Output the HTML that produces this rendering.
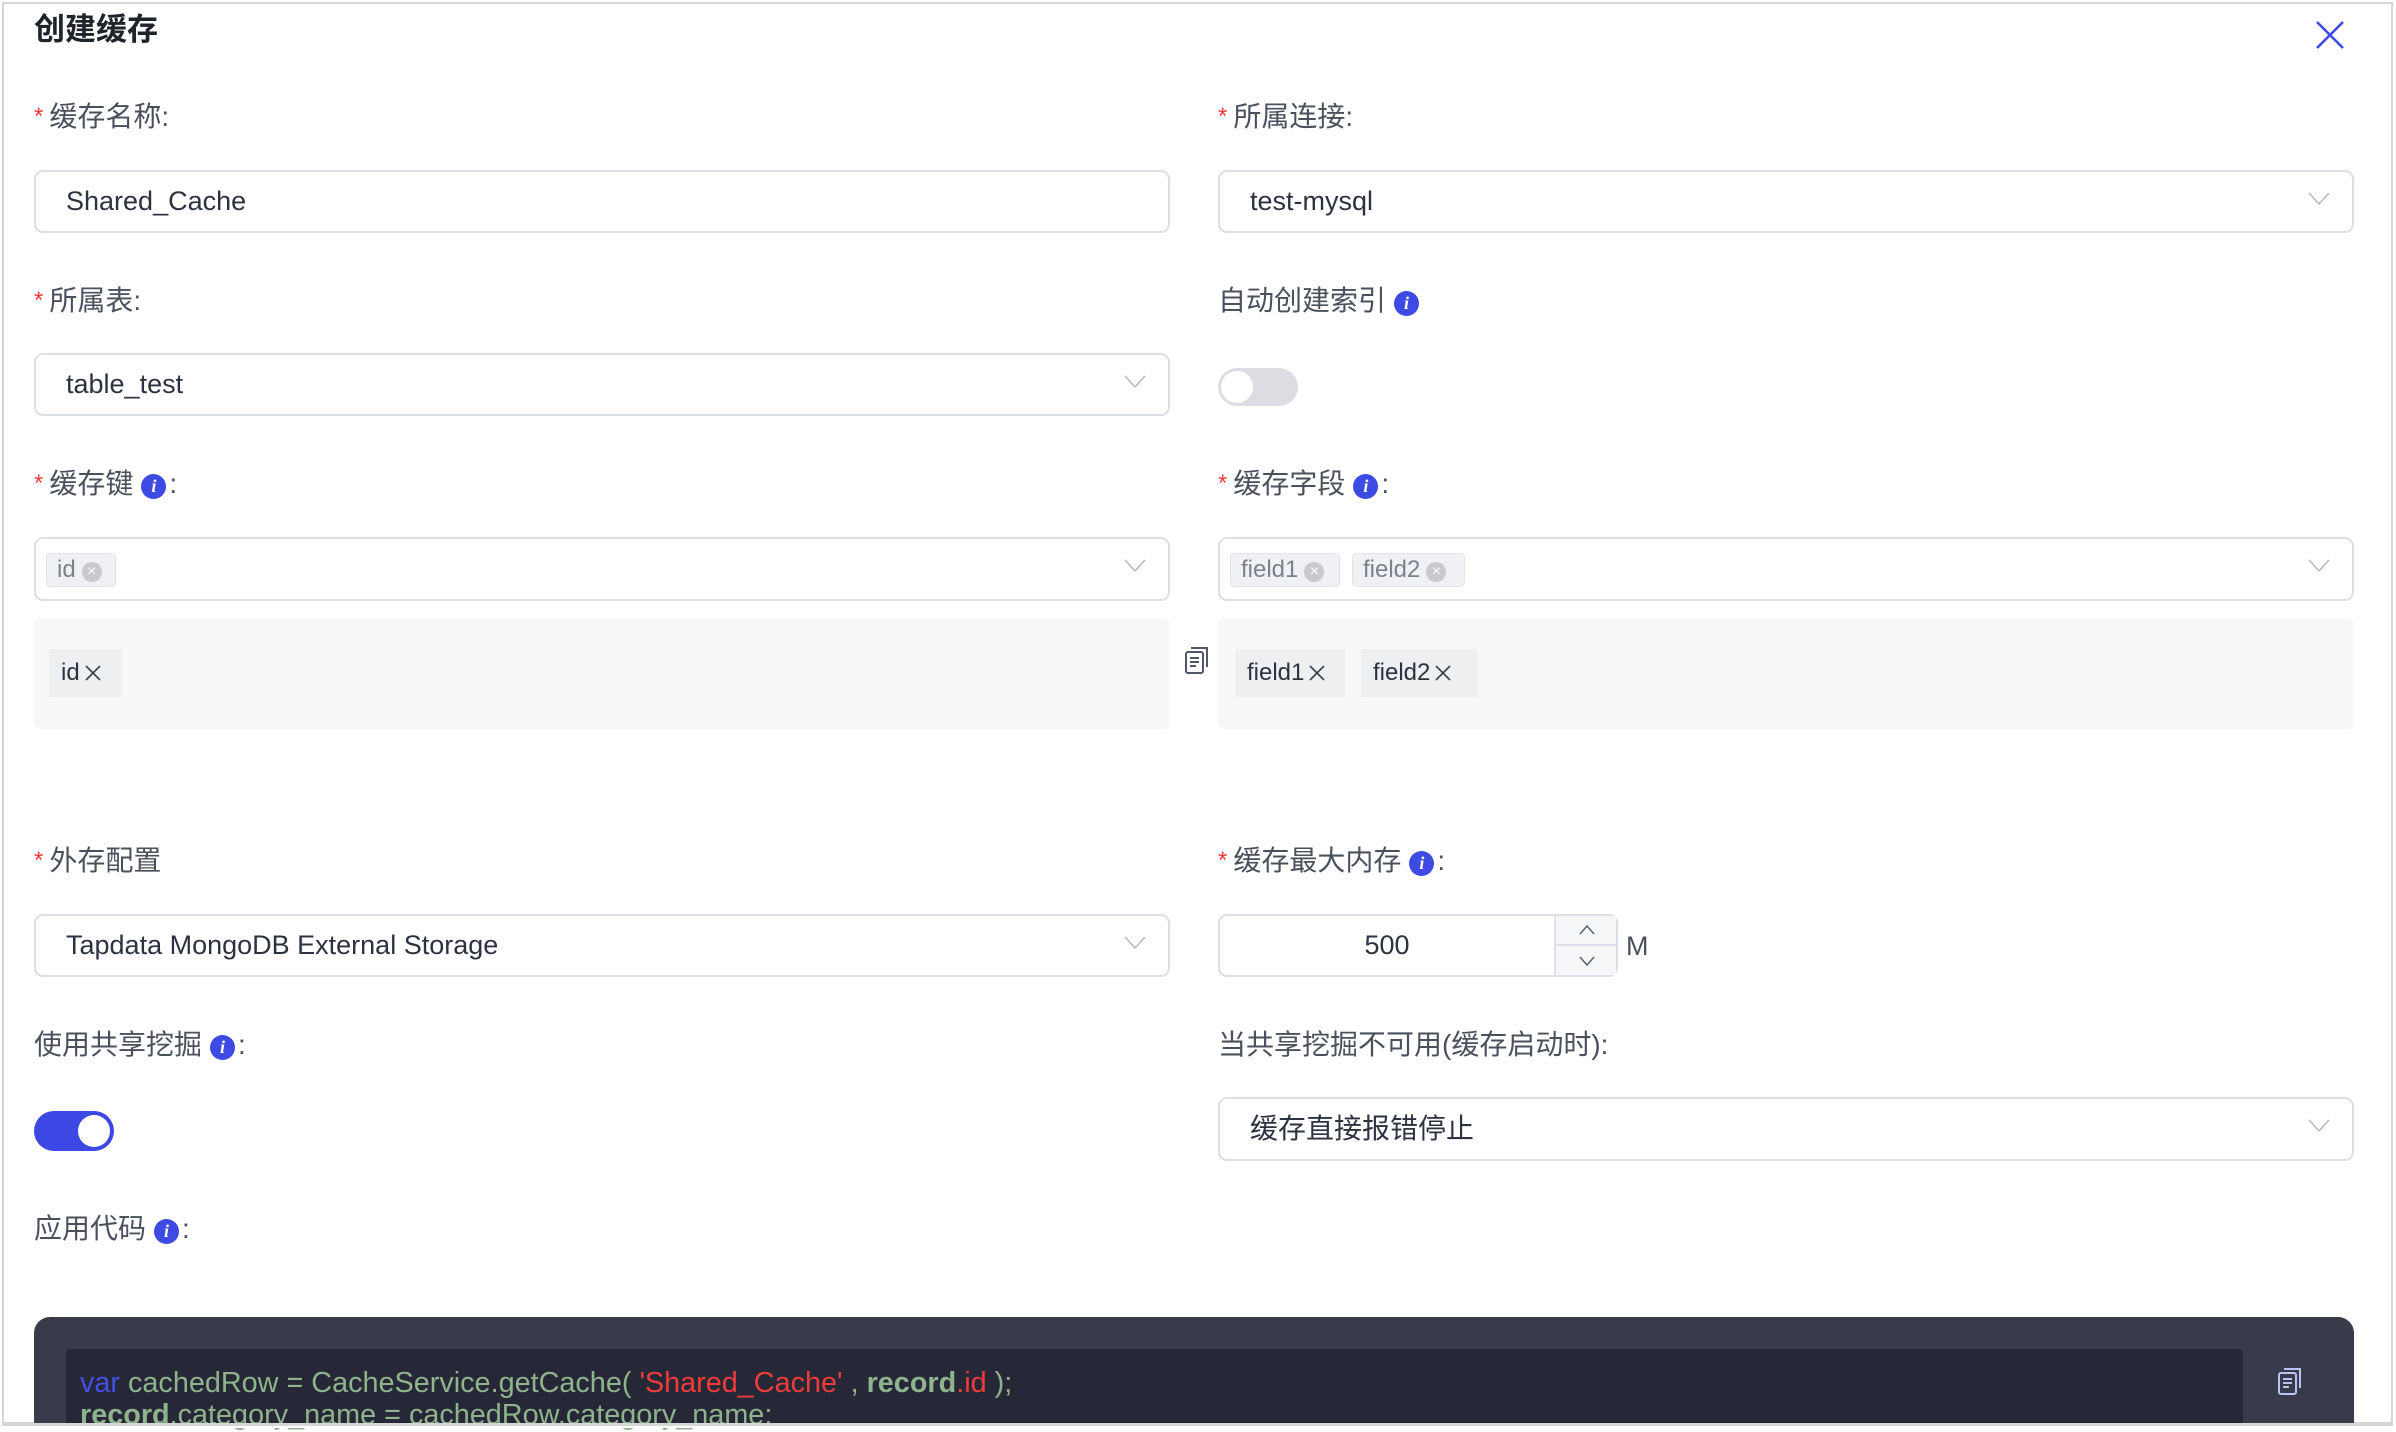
<!DOCTYPE html>
<html><head><meta charset="utf-8"><style>
*{box-sizing:border-box;margin:0;padding:0}
body{width:2396px;height:1428px;background:#fff;position:relative;overflow:hidden;font-family:"Liberation Sans","Noto Sans CJK SC",sans-serif;color:#2c3240}
.frame{position:absolute;left:2px;top:2px;width:2391px;height:1423px;border:2px solid #d6d6d6;border-bottom-width:3px}
.a{position:absolute}
.lbl{position:absolute;font-size:28px;color:#4a505c;line-height:36px;white-space:nowrap}
.lbl .s{color:#f23c3c;margin-right:6px;font-size:24px;vertical-align:2px}
.box{position:absolute;border:2px solid #dcdfe6;border-radius:9px;background:#fff;font-size:27px;line-height:58px;padding-left:30px;color:#2c3240;white-space:nowrap}
.chev{position:absolute;right:22px;top:20px;width:22px;height:14px}
.info{display:inline-block;width:25px;height:25px;border-radius:50%;background:#3d4be3;color:#fff;font:italic bold 18px/25px "Liberation Serif",serif;text-align:center;vertical-align:1px;margin:0 3px 0 8px}
.tag{position:absolute;background:#f0f1f4;border:1px solid #e1e3e8;border-radius:5px;color:#7b818c;font-size:24px;line-height:32px;padding-left:10px;height:34px}
.tag i{display:inline-block;width:20px;height:20px;border-radius:50%;background:#c8cacf;color:#fff;font-style:normal;font-size:16px;line-height:20px;text-align:center;vertical-align:1px;margin-left:6px}
.gb{position:absolute;background:#f8f8f9;border-radius:6px}
.t2{position:absolute;background:#eeeff1;font-size:24px;line-height:48px;height:48px;padding-left:12px;color:#2c3240}
.t2 svg{vertical-align:-2px;margin-left:4px}
.code{font-family:"Liberation Sans",sans-serif;font-size:28.8px;color:#8fb38d;position:absolute;left:80px;white-space:nowrap}
</style></head><body>
<div class="frame"></div>
<div class="a" style="left:34px;top:10px;font-size:31px;font-weight:bold;color:#1f232b;line-height:40px">创建缓存</div>
<svg class="a" style="left:2314px;top:19px" width="32" height="32" viewBox="0 0 32 32"><path d="M3 3L29 29M29 3L3 29" stroke="#3d4be3" stroke-width="2.6"/></svg>

<div class="lbl" style="left:34px;top:99px"><span class="s">*</span>缓存名称:</div>
<div class="box" style="left:34px;top:170px;width:1136px;height:63px">Shared_Cache</div>
<div class="lbl" style="left:1218px;top:99px"><span class="s">*</span>所属连接:</div>
<div class="box" style="left:1218px;top:170px;width:1136px;height:63px">test-mysql<svg class="chev" viewBox="0 0 22 14"><path d="M1 1L11 12L21 1" fill="none" stroke="#b4b8c0" stroke-width="1.5"/></svg></div>

<div class="lbl" style="left:34px;top:283px"><span class="s">*</span>所属表:</div>
<div class="box" style="left:34px;top:353px;width:1136px;height:63px">table_test<svg class="chev" viewBox="0 0 22 14"><path d="M1 1L11 12L21 1" fill="none" stroke="#b4b8c0" stroke-width="1.5"/></svg></div>
<div class="lbl" style="left:1218px;top:283px">自动创建索引<span class="info">i</span></div>
<div class="a" style="left:1218px;top:368px;width:80px;height:38px;border-radius:19px;background:#dcdde2"><div class="a" style="left:3px;top:3px;width:32px;height:32px;border-radius:50%;background:#fff"></div></div>

<div class="lbl" style="left:34px;top:466px"><span class="s">*</span>缓存键<span class="info">i</span>:</div>
<div class="box" style="left:34px;top:537px;width:1136px;height:64px"><svg class="chev" viewBox="0 0 22 14"><path d="M1 1L11 12L21 1" fill="none" stroke="#b4b8c0" stroke-width="1.5"/></svg></div>
<div class="tag" style="left:46px;top:553px;width:70px">id<i>×</i></div>
<div class="lbl" style="left:1218px;top:466px"><span class="s">*</span>缓存字段<span class="info">i</span>:</div>
<div class="box" style="left:1218px;top:537px;width:1136px;height:64px"><svg class="chev" viewBox="0 0 22 14"><path d="M1 1L11 12L21 1" fill="none" stroke="#b4b8c0" stroke-width="1.5"/></svg></div>
<div class="tag" style="left:1230px;top:553px;width:110px">field1<i>×</i></div>
<div class="tag" style="left:1352px;top:553px;width:113px">field2<i>×</i></div>

<div class="gb" style="left:34px;top:619px;width:1136px;height:110px"></div>
<div class="gb" style="left:1218px;top:619px;width:1136px;height:110px"></div>
<div class="t2" style="left:49px;top:649px;width:73px">id<svg width="18" height="18" viewBox="0 0 18 18"><path d="M2 2L16 16M16 2L2 16" stroke="#3a3f4a" stroke-width="1.6"/></svg></div>
<div class="t2" style="left:1235px;top:649px;width:110px">field1<svg width="18" height="18" viewBox="0 0 18 18"><path d="M2 2L16 16M16 2L2 16" stroke="#3a3f4a" stroke-width="1.6"/></svg></div>
<div class="t2" style="left:1361px;top:649px;width:117px">field2<svg width="18" height="18" viewBox="0 0 18 18"><path d="M2 2L16 16M16 2L2 16" stroke="#3a3f4a" stroke-width="1.6"/></svg></div>
<svg class="a" style="left:1183px;top:645px" width="28" height="30" viewBox="0 0 28 30"><path d="M8 3H24V22" fill="none" stroke="#4f5769" stroke-width="2"/><rect x="3" y="7" width="17" height="21" rx="2" fill="none" stroke="#4f5769" stroke-width="2"/><path d="M7 13H16M7 17H16M7 21H13" stroke="#4f5769" stroke-width="2"/></svg>

<div class="lbl" style="left:34px;top:843px"><span class="s">*</span>外存配置</div>
<div class="box" style="left:34px;top:914px;width:1136px;height:63px">Tapdata MongoDB External Storage<svg class="chev" viewBox="0 0 22 14"><path d="M1 1L11 12L21 1" fill="none" stroke="#b4b8c0" stroke-width="1.5"/></svg></div>
<div class="lbl" style="left:1218px;top:843px"><span class="s">*</span>缓存最大内存<span class="info">i</span>:</div>
<div class="box" style="left:1218px;top:914px;width:400px;height:63px;padding:0"><div class="a" style="left:0;top:0;width:334px;text-align:center">500</div><div class="a" style="left:334px;top:0;width:62px;height:59px;background:#f5f6f8;border-left:2px solid #dcdfe6"><div class="a" style="left:0;top:28px;width:62px;height:2px;background:#dcdfe6"></div><svg class="a" style="left:23px;top:9px" width="16" height="10" viewBox="0 0 16 10"><path d="M1 9L8 1L15 9" fill="none" stroke="#5b616c" stroke-width="1.5"/></svg><svg class="a" style="left:23px;top:40px" width="16" height="10" viewBox="0 0 16 10"><path d="M1 1L8 9L15 1" fill="none" stroke="#5b616c" stroke-width="1.5"/></svg></div></div>
<div class="a" style="left:1626px;top:928px;font-size:27px;color:#4a505c;line-height:36px">M</div>

<div class="lbl" style="left:34px;top:1027px">使用共享挖掘<span class="info">i</span>:</div>
<div class="a" style="left:34px;top:1111px;width:80px;height:40px;border-radius:20px;background:#3d47e4"><div class="a" style="left:44px;top:4px;width:32px;height:32px;border-radius:50%;background:#fff"></div></div>
<div class="lbl" style="left:1218px;top:1027px">当共享挖掘不可用(缓存启动时):</div>
<div class="box" style="left:1218px;top:1097px;width:1136px;height:64px;line-height:60px;font-size:28px">缓存直接报错停止<svg class="chev" viewBox="0 0 22 14"><path d="M1 1L11 12L21 1" fill="none" stroke="#b4b8c0" stroke-width="1.5"/></svg></div>

<div class="lbl" style="left:34px;top:1211px">应用代码<span class="info">i</span>:</div>
<div class="a" style="left:34px;top:1317px;width:2320px;height:107px;background:#393b4b;border-radius:16px 16px 0 0"></div>
<div class="a" style="left:66px;top:1349px;width:2177px;height:75px;background:#262837;border-radius:4px 4px 0 0"></div>
<div class="code" style="top:1366px;line-height:34px"><span style="color:#4450e8">var</span> cachedRow = CacheService.getCache( <span style="color:#f03b3b">'Shared_Cache'</span> , <b>record</b><span style="color:#f03b3b">.id</span> );</div>
<div class="code" style="top:1398px;line-height:34px"><b>record</b>.category_name = cachedRow.category_name;</div>
<div class="a" style="left:0;top:1424px;width:2396px;height:4px;background:#fff"></div>
<div class="a" style="left:2px;top:1423px;width:2391px;height:3px;background:#d6d6d6"></div>
<svg class="a" style="left:2276px;top:1366px" width="28" height="30" viewBox="0 0 28 30"><path d="M8 3H24V22" fill="none" stroke="#b9c3f5" stroke-width="2"/><rect x="3" y="7" width="17" height="21" rx="2" fill="none" stroke="#b9c3f5" stroke-width="2"/><path d="M7 13H16M7 17H16M7 21H13" stroke="#b9c3f5" stroke-width="2"/></svg>
</body></html>
